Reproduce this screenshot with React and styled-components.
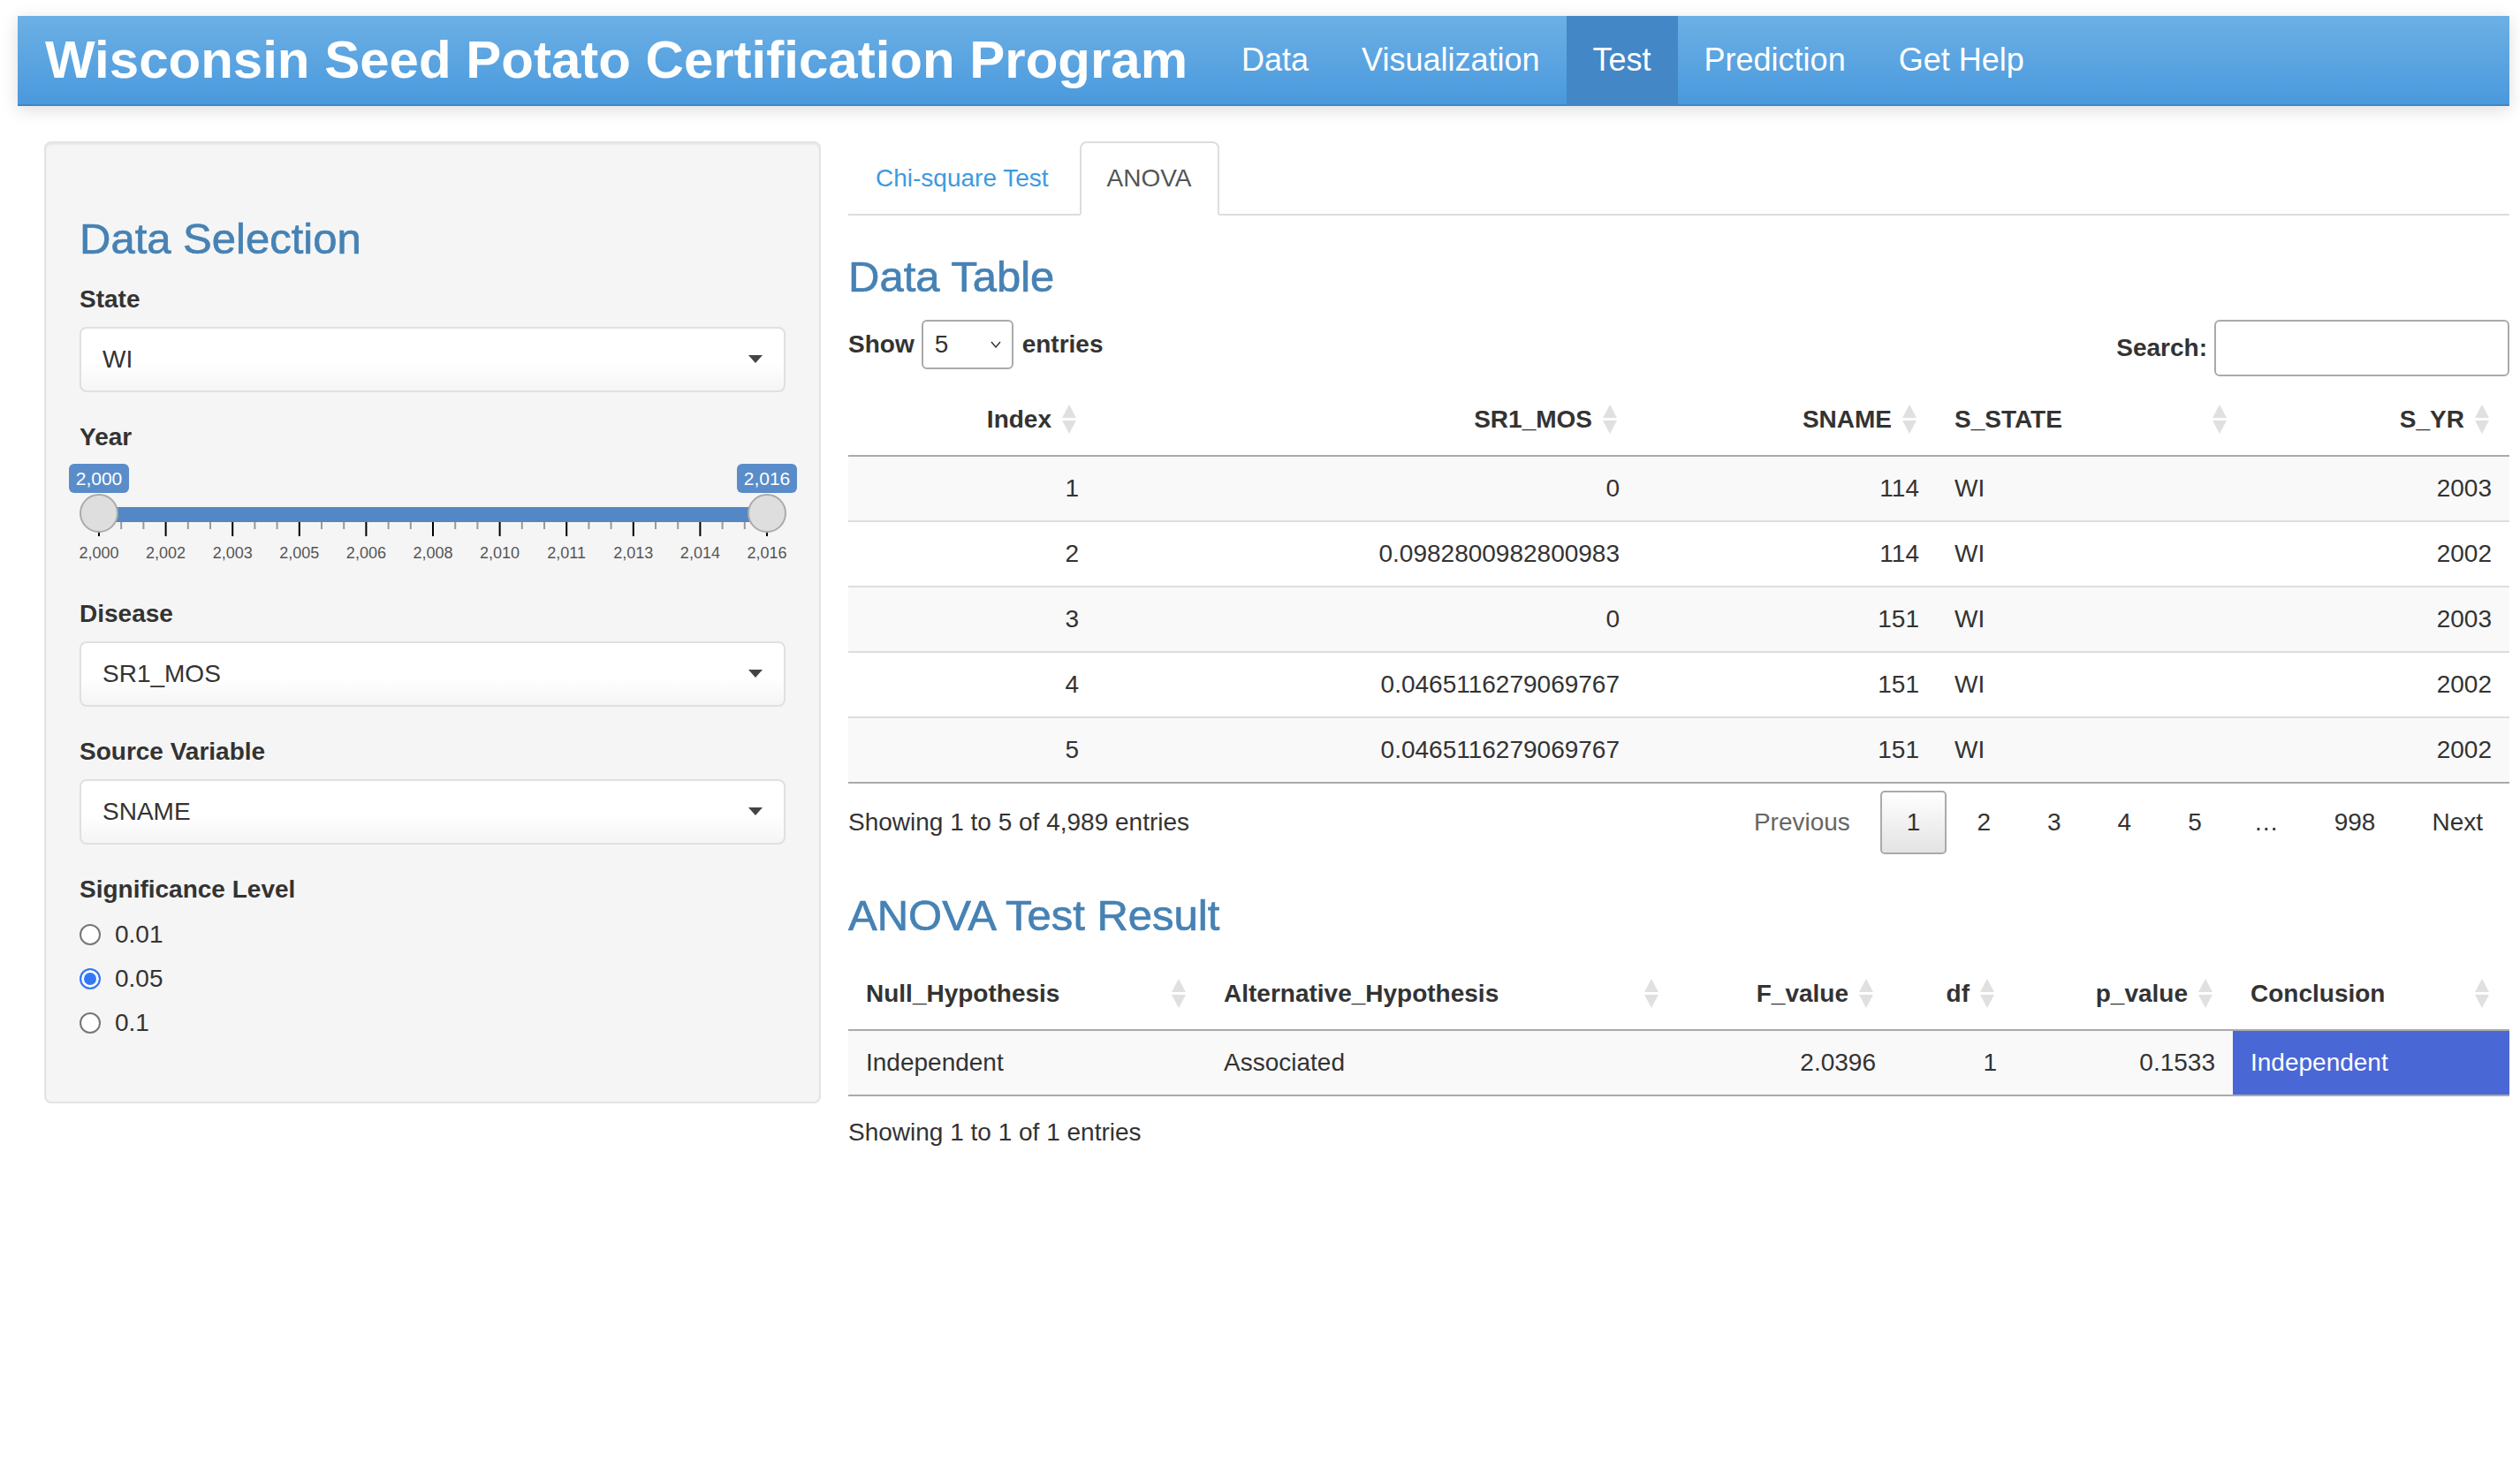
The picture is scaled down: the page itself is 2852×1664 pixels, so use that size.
import React from 'react';
import styled, { createGlobalStyle, css } from 'styled-components';

const GlobalStyle = createGlobalStyle`
  html, body {
    margin: 0;
    padding: 0;
    background: #fff;
  }
  body {
    font-family: "Liberation Sans", Arial, Helvetica, sans-serif;
    font-size: 28px;
    line-height: 1.42857;
    color: #333;
  }
  * {
    box-sizing: border-box;
  }
`;

const NAV_ITEMS = ['Data', 'Visualization', 'Test', 'Prediction', 'Get Help'];
const YEAR_TICKS = ['2,000', '2,002', '2,003', '2,005', '2,006', '2,008', '2,010', '2,011', '2,013', '2,014', '2,016'];
const TICK_X0 = 22;
const TICK_STEP = 75.6;

const DATA_COLUMNS = [
  { label: 'Index', width: 281, align: 'right' },
  { label: 'SR1_MOS', width: 612, align: 'right' },
  { label: 'SNAME', width: 339, align: 'right' },
  { label: 'S_STATE', width: 351, align: 'left' },
  { label: 'S_YR', width: 297, align: 'right' },
];

const DATA_ROWS = [
  ['1', '0', '114', 'WI', '2003'],
  ['2', '0.0982800982800983', '114', 'WI', '2002'],
  ['3', '0', '151', 'WI', '2003'],
  ['4', '0.0465116279069767', '151', 'WI', '2002'],
  ['5', '0.0465116279069767', '151', 'WI', '2002'],
];

const ANOVA_COLUMNS = [
  { label: 'Null_Hypothesis', width: 405, align: 'left' },
  { label: 'Alternative_Hypothesis', width: 535, align: 'left' },
  { label: 'F_value', width: 243, align: 'right' },
  { label: 'df', width: 137, align: 'right' },
  { label: 'p_value', width: 247, align: 'right' },
  { label: 'Conclusion', width: 313, align: 'left' },
];

const ANOVA_ROWS = [
  ['Independent', 'Associated', '2.0396', '1', '0.1533', 'Independent'],
];

export default function App() {
  return (
    <>
      <GlobalStyle />
      <Navbar>
        <Brand>Wisconsin Seed Potato Certification Program</Brand>
        {NAV_ITEMS.map((item) => (
          <NavLink key={item} $active={item === 'Test'}>{item}</NavLink>
        ))}
      </Navbar>
      <Page>
        <Sidebar>
          <Heading $top={44}>Data Selection</Heading>
          <FormGroup>
            <FieldLabel>State</FieldLabel>
            <SelectBox value="WI" />
          </FormGroup>
          <FormGroup>
            <FieldLabel $gap={10}>Year</FieldLabel>
            <YearSlider />
          </FormGroup>
          <FormGroup>
            <FieldLabel>Disease</FieldLabel>
            <SelectBox value="SR1_MOS" />
          </FormGroup>
          <FormGroup>
            <FieldLabel>Source Variable</FieldLabel>
            <SelectBox value="SNAME" />
          </FormGroup>
          <RadioGroup>
            <FieldLabel>Significance Level</FieldLabel>
            {['0.01', '0.05', '0.1'].map((v) => (
              <RadioRow key={v}>
                <RadioDot $checked={v === '0.05'} />
                {v}
              </RadioRow>
            ))}
          </RadioGroup>
        </Sidebar>

        <Main>
          <TabList>
            <Tab><TabLink>Chi-square Test</TabLink></Tab>
            <Tab><TabLink $active>ANOVA</TabLink></Tab>
          </TabList>

          <Heading $top={43}>Data Table</Heading>
          <Controls>
            <ControlGroup>
              Show
              <LengthSelect>
                5
                <svg width="12" height="8" viewBox="0 0 12 8">
                  <polyline points="1,1 6,7 11,1" fill="none" stroke="#333" strokeWidth="1.4" />
                </svg>
              </LengthSelect>
              entries
            </ControlGroup>
            <ControlGroup>
              Search:
              <SearchInput />
            </ControlGroup>
          </Controls>
          <DataTable columns={DATA_COLUMNS} rows={DATA_ROWS} />
          <TableFooter>
            <Info>Showing 1 to 5 of 4,989 entries</Info>
            <Pagination>
              <PageButton $disabled>Previous</PageButton>
              <PageButton $current>1</PageButton>
              <PageButton>2</PageButton>
              <PageButton>3</PageButton>
              <PageButton>4</PageButton>
              <PageButton>5</PageButton>
              <Ellipsis>…</Ellipsis>
              <PageButton>998</PageButton>
              <PageButton>Next</PageButton>
            </Pagination>
          </TableFooter>

          <Heading $top={43}>ANOVA Test Result</Heading>
          <DataTable columns={ANOVA_COLUMNS} rows={ANOVA_ROWS} highlightLast />
          <Info $top={21}>Showing 1 to 1 of 1 entries</Info>
        </Main>
      </Page>
    </>
  );
}

function SelectBox({ value }) {
  return (
    <StyledSelect>
      <span>{value}</span>
      <Caret />
    </StyledSelect>
  );
}

function YearSlider() {
  const minorCount = (YEAR_TICKS.length - 1) * 3;
  return (
    <SliderWrap>
      <Badge $x={TICK_X0}>2,000</Badge>
      <Badge $x={TICK_X0 + TICK_STEP * 10}>2,016</Badge>
      <Track />
      <TickSvg width="799" height="16">
        {Array.from({ length: minorCount + 1 }, (_, i) => {
          const x = TICK_X0 + i * (TICK_STEP / 3);
          const major = i % 3 === 0;
          return (
            <rect
              key={i}
              x={x - 1}
              y={0}
              width={2}
              height={major ? 16 : 8}
              fill={major ? '#000' : '#999'}
            />
          );
        })}
      </TickSvg>
      <Handle $x={TICK_X0} />
      <Handle $x={TICK_X0 + TICK_STEP * 10} />
      {YEAR_TICKS.map((t, i) => (
        <GridLabel key={t} $x={TICK_X0 + i * TICK_STEP}>{t}</GridLabel>
      ))}
    </SliderWrap>
  );
}

function SortIcon() {
  return (
    <SortSvg width="16" height="34" viewBox="0 0 16 34">
      <polygon points="8,0 16,15 0,15" fill="#e0e0e0" />
      <polygon points="0,18 16,18 8,33" fill="#e0e0e0" />
    </SortSvg>
  );
}

function DataTable({ columns, rows, highlightLast }) {
  return (
    <Table>
      <colgroup>
        {columns.map((c) => <col key={c.label} style={{ width: c.width }} />)}
      </colgroup>
      <thead>
        <tr>
          {columns.map((c) => (
            <Th key={c.label} $align={c.align}>
              {c.label}
              <SortIcon />
            </Th>
          ))}
        </tr>
      </thead>
      <tbody>
        {rows.map((row, r) => (
          <Row key={r} $odd={r % 2 === 0}>
            {row.map((cell, i) => (
              <Td
                key={i}
                $align={columns[i].align}
                $highlight={highlightLast && i === row.length - 1}
              >
                {cell}
              </Td>
            ))}
          </Row>
        ))}
      </tbody>
    </Table>
  );
}

const Navbar = styled.nav`
  display: flex;
  align-items: stretch;
  height: 102px;
  margin: 18px 12px 0 20px;
  background: linear-gradient(to bottom, #6cb0e5 0%, #4a99dd 100%);
  border-bottom: 2px solid #3f86c8;
  box-shadow: 0 4px 18px rgba(0, 0, 0, 0.14);
`;

const Brand = styled.div`
  display: flex;
  align-items: center;
  padding: 0 31px;
  font-size: 60px;
  font-weight: 700;
  color: #fff;
  white-space: nowrap;
`;

const NavLink = styled.a`
  display: flex;
  align-items: center;
  padding: 0 30px;
  font-size: 36px;
  color: #fff;
  text-decoration: none;
  background: ${(p) => (p.$active ? '#4387c7' : 'transparent')};
`;

const Page = styled.div`
  display: flex;
  align-items: flex-start;
  gap: 31px;
  padding: 40px 12px 60px 50px;
`;

const Sidebar = styled.aside`
  flex: none;
  width: 879px;
  padding: 38px;
  background: #f5f5f5;
  border: 2px solid #e3e3e3;
  border-radius: 8px;
  box-shadow: inset 0 2px 2px rgba(0, 0, 0, 0.05);
`;

const Main = styled.main`
  flex: 1;
  min-width: 0;
`;

const Heading = styled.h3`
  margin: ${(p) => p.$top}px 0 21px;
  font-size: 49px;
  font-weight: 400;
  line-height: 1.1;
  color: #4682b4;
  -webkit-text-stroke: 0.7px #4682b4;
`;

const FormGroup = styled.div`
  margin-bottom: 31px;
`;

const FieldLabel = styled.label`
  display: block;
  margin-bottom: ${(p) => p.$gap ?? 11}px;
  font-weight: 700;
  line-height: 40px;
  color: #333;
`;

const StyledSelect = styled.div`
  display: flex;
  align-items: center;
  justify-content: space-between;
  height: 74px;
  padding: 0 24px 0 24px;
  background: linear-gradient(to bottom, #fff 55%, #f5f5f5 100%);
  border: 2px solid #e0e0e0;
  border-radius: 8px;
  color: #333;
`;

const Caret = styled.span`
  width: 0;
  height: 0;
  border-left: 8px solid transparent;
  border-right: 8px solid transparent;
  border-top: 9px solid #444;
`;

const SliderWrap = styled.div`
  position: relative;
  height: 119px;
`;

const Badge = styled.div`
  position: absolute;
  top: 0;
  left: ${(p) => p.$x - 34}px;
  width: 68px;
  height: 33px;
  border-radius: 6px;
  background: #5a8cca;
  color: #fff;
  font-size: 21px;
  line-height: 33px;
  text-align: center;
`;

const Track = styled.div`
  position: absolute;
  top: 49px;
  left: 22px;
  right: 21px;
  height: 17px;
  background: #5387c5;
`;

const TickSvg = styled.svg`
  position: absolute;
  top: 66px;
  left: 0;
`;

const Handle = styled.div`
  position: absolute;
  top: 34px;
  left: ${(p) => p.$x - 22}px;
  width: 44px;
  height: 44px;
  border-radius: 50%;
  background: #dedede;
  border: 2px solid #aaa;
`;

const GridLabel = styled.span`
  position: absolute;
  top: 89px;
  left: ${(p) => p.$x}px;
  transform: translateX(-50%);
  font-size: 18px;
  line-height: 24px;
  color: #555;
`;

const RadioGroup = styled.div`
  margin-bottom: 31px;
`;

const RadioRow = styled.label`
  display: flex;
  align-items: center;
  gap: 16px;
  height: 40px;
  margin-bottom: 10px;
  color: #333;
`;

const RadioDot = styled.span`
  flex: none;
  width: 24px;
  height: 24px;
  border-radius: 50%;
  border: 2px solid ${(p) => (p.$checked ? '#3478f6' : '#777')};
  background: ${(p) => (p.$checked ? '#3478f6' : '#fff')};
  box-shadow: ${(p) => (p.$checked ? 'inset 0 0 0 3px #fff' : 'none')};
`;

const TabList = styled.ul`
  display: flex;
  margin: 0;
  padding: 0;
  list-style: none;
  border-bottom: 2px solid #ddd;
`;

const Tab = styled.li`
  margin: 0 4px -2px 0;
`;

const TabLink = styled.a`
  display: block;
  padding: 20px 29px;
  line-height: 40px;
  border: 2px solid transparent;
  border-radius: 8px 8px 0 0;
  color: #3d9ae0;
  text-decoration: none;
  ${(p) => p.$active && css`
    color: #555;
    background: #fff;
    border-color: #ddd #ddd transparent;
  `}
`;

const Controls = styled.div`
  display: flex;
  justify-content: space-between;
  align-items: flex-start;
  margin-bottom: 9px;
`;

const ControlGroup = styled.label`
  display: flex;
  align-items: center;
  font-weight: 700;
  color: #333;
`;

const LengthSelect = styled.span`
  display: inline-flex;
  align-items: center;
  justify-content: space-between;
  width: 104px;
  height: 56px;
  margin: 0 10px 0 8px;
  padding: 0 12px 0 13px;
  border: 2px solid #aaa;
  border-radius: 6px;
  font-weight: 400;
`;

const SearchInput = styled.span`
  display: block;
  width: 334px;
  height: 64px;
  margin-left: 8px;
  border: 2px solid #aaa;
  border-radius: 6px;
  background: #fff;
`;

const Table = styled.table`
  width: 100%;
  table-layout: fixed;
  border-collapse: separate;
  border-spacing: 0;
`;

const Th = styled.th`
  position: relative;
  padding: 20px 51px 20px 20px;
  line-height: 40px;
  font-weight: 700;
  text-align: ${(p) => p.$align};
  border-bottom: 2px solid #aaa;
  white-space: nowrap;
`;

const SortSvg = styled.svg`
  position: absolute;
  right: 23px;
  top: 50%;
  transform: translateY(-50%);
`;

const Row = styled.tr`
  background: ${(p) => (p.$odd ? '#f9f9f9' : '#fff')};
  &:not(:first-child) td {
    border-top: 2px solid #ddd;
  }
  &:last-child td {
    border-bottom: 2px solid #aaa;
  }
`;

const Td = styled.td`
  padding: 16px 20px;
  line-height: 40px;
  text-align: ${(p) => p.$align};
  white-space: nowrap;
  ${(p) => p.$highlight && css`
    background: #4a67d6;
    color: #fff;
  `}
`;

const TableFooter = styled.div`
  display: flex;
  align-items: center;
  justify-content: space-between;
  margin-top: 8px;
`;

const Info = styled.div`
  margin-top: ${(p) => p.$top ?? 0}px;
  line-height: 40px;
  color: #333;
`;

const Pagination = styled.div`
  display: flex;
  align-items: center;
`;

const PageButton = styled.span`
  min-width: 42px;
  margin-left: 4px;
  padding: 14px 28px;
  line-height: 40px;
  text-align: center;
  border: 2px solid transparent;
  border-radius: 5px;
  color: ${(p) => (p.$disabled ? '#666' : '#333')};
  ${(p) => p.$current && css`
    border-color: #aaa;
    background: linear-gradient(to bottom, #fff 0%, #e3e3e3 100%);
  `}
`;

const Ellipsis = styled.span`
  padding: 0 29px;
  line-height: 40px;
`;
